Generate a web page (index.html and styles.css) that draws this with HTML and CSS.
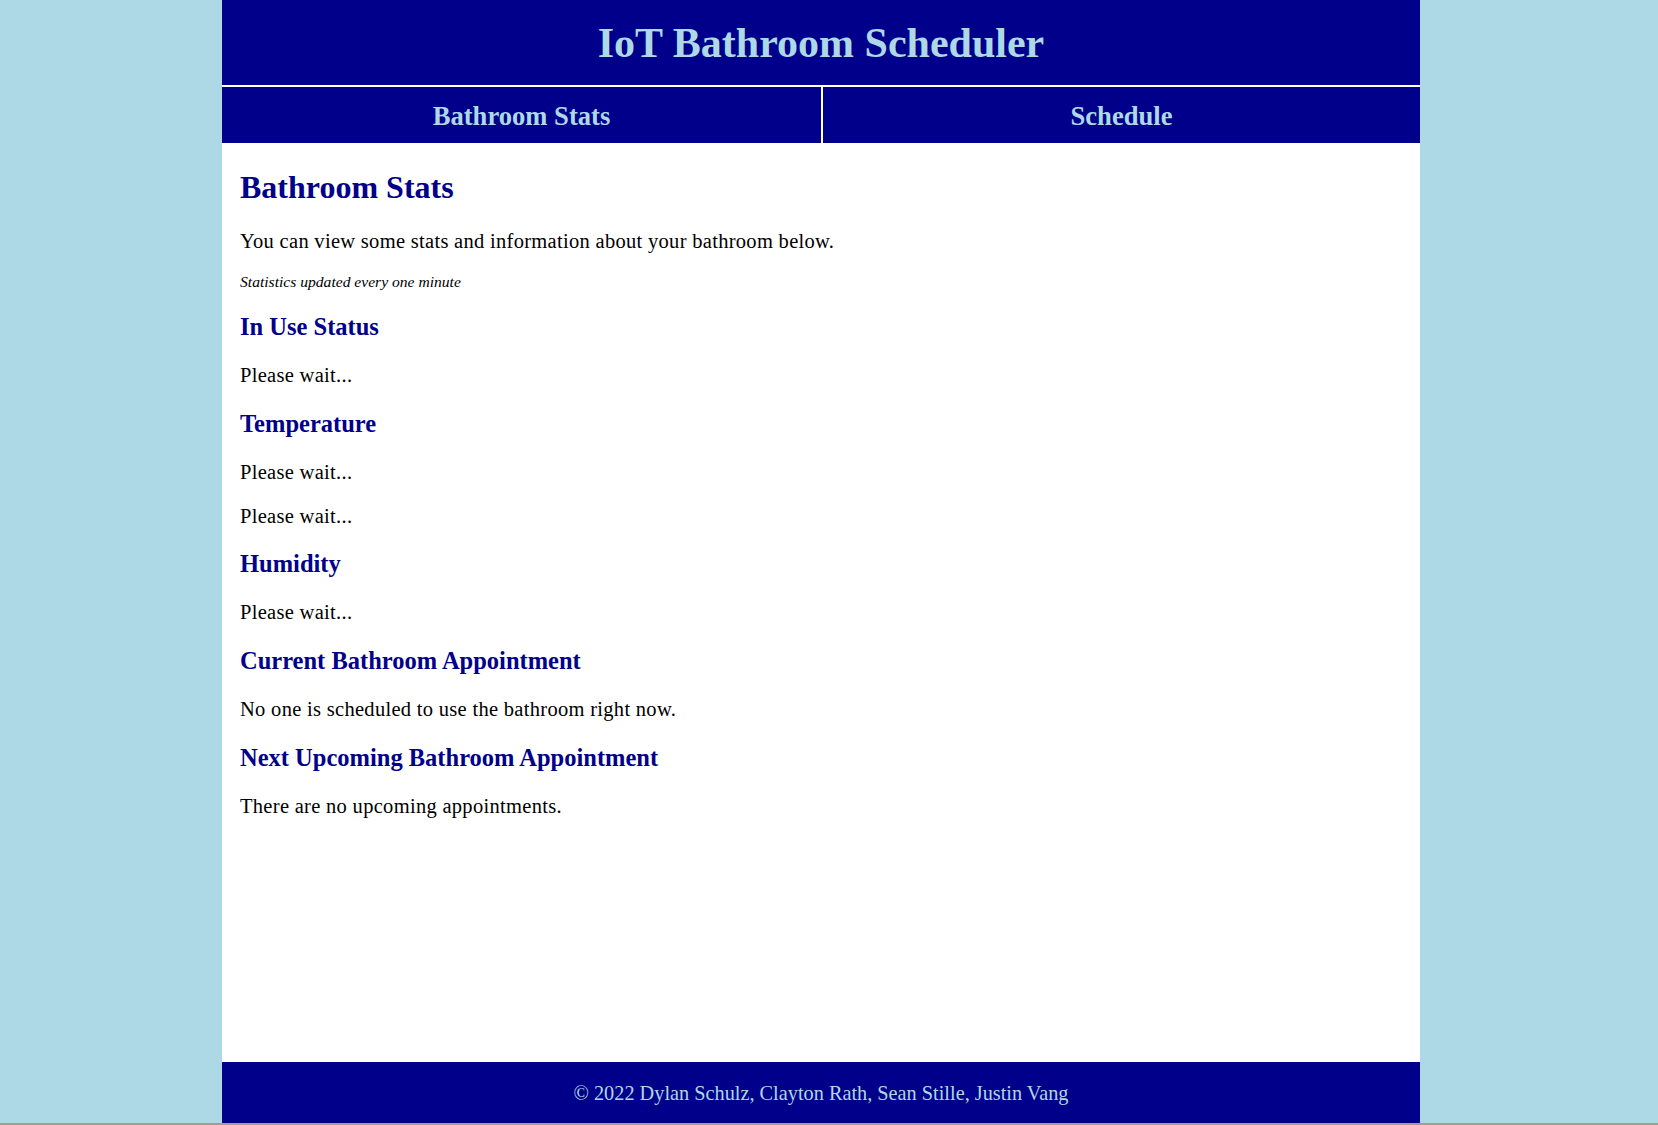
FILE: index.html
```html
<!DOCTYPE html>
<html lang="en">
<head>
<meta charset="utf-8">
<title>IoT Bathroom Scheduler</title>
<link rel="stylesheet" href="styles.css">
</head>
<body>
<div class="page">
  <header class="site-header">
    <h1 class="site-title">IoT Bathroom Scheduler</h1>
  </header>
  <nav class="site-nav">
    <a class="nav-link" href="#">Bathroom Stats</a>
    <a class="nav-link nav-link-right" href="#">Schedule</a>
  </nav>
  <main class="content">
    <h2 class="page-title">Bathroom Stats</h2>
    <p class="text">You can view some stats and information about your bathroom below.</p>
    <p class="note">Statistics updated every one minute</p>
    <h3 class="section-title">In Use Status</h3>
    <p class="text">Please wait...</p>
    <h3 class="section-title">Temperature</h3>
    <p class="text">Please wait...</p>
    <p class="text">Please wait...</p>
    <h3 class="section-title">Humidity</h3>
    <p class="text">Please wait...</p>
    <h3 class="section-title">Current Bathroom Appointment</h3>
    <p class="text">No one is scheduled to use the bathroom right now.</p>
    <h3 class="section-title">Next Upcoming Bathroom Appointment</h3>
    <p class="text">There are no upcoming appointments.</p>
  </main>
  <footer class="site-footer">© 2022 Dylan Schulz, Clayton Rath, Sean Stille, Justin Vang</footer>
</div>
</body>
</html>
```
FILE: styles.css
```css
html, body {
  margin: 0;
  padding: 0;
}
body {
  background: #add8e6;
  font-family: "Liberation Serif", "Times New Roman", serif;
  font-size: 20.5px;
  color: #000;
  border-bottom: 2px solid #a19d94;
}
.page {
  width: 1198px;
  margin-left: 222px;
  min-height: 1123px;
  background: #fff;
  display: flex;
  flex-direction: column;
}
.site-header {
  background: #00008b;
  height: 85px;
  display: flex;
  align-items: center;
  justify-content: center;
}
.site-title {
  margin: 0;
  color: #add8e6;
  font-size: 42px;
  font-weight: bold;
  line-height: 1;
}
.site-nav {
  display: grid;
  grid-template-columns: 1fr 1fr;
  border-top: 2px solid #fff;
  background: #00008b;
}
.nav-link {
  height: 56px;
  padding-top: 2px;
  box-sizing: border-box;
  display: flex;
  align-items: center;
  justify-content: center;
  color: #add8e6;
  font-weight: bold;
  font-size: 26.6px;
  text-decoration: none;
}
.nav-link-right {
  border-left: 2px solid #fff;
}
.content {
  flex: 1;
  padding: 5px 18px 20px;
}
.page-title {
  color: #00008b;
  font-size: 32px;
  margin: 20px 0 23px;
  line-height: 38px;
}
.text {
  margin: 19.5px 0;
  line-height: 24px;
  letter-spacing: 0.3px;
}
.note {
  font-style: italic;
  font-size: 15.6px;
  line-height: 18px;
  margin: 19.5px 0;
}
.section-title {
  color: #00008b;
  font-size: 24.5px;
  margin: 22.4px 0;
  line-height: 28px;
}
.site-footer {
  background: #00008b;
  color: #add8e6;
  font-size: 20.3px;
  height: 61px;
  display: flex;
  align-items: center;
  justify-content: center;
  padding-top: 1px;
  box-sizing: border-box;
}
```
